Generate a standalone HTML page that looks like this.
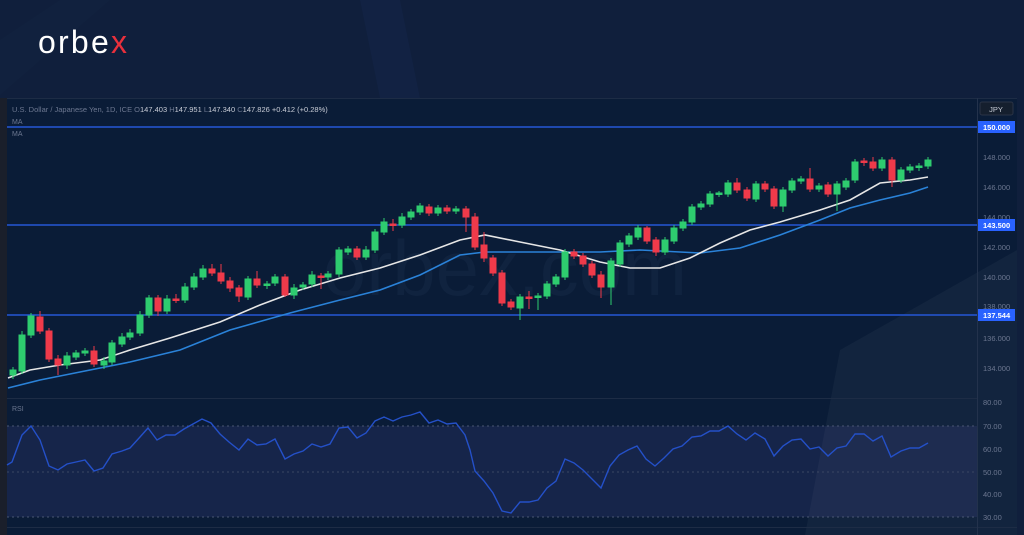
<!DOCTYPE html>
<html><head><meta charset="utf-8"><style>
html,body{margin:0;padding:0;width:1024px;height:535px;overflow:hidden;background:#0f1e3b;font-family:"Liberation Sans",sans-serif}
</style></head><body>
<svg width="1024" height="535" viewBox="0 0 1024 535" xmlns="http://www.w3.org/2000/svg" style="position:absolute;left:0;top:0">
<rect width="1024" height="535" fill="#101f3c"/>
<polygon points="0,40 60,0 110,0 0,95" fill="#13233f" opacity="0.6"/>
<polygon points="360,0 400,0 420,98 380,98" fill="#14254a" opacity="0.5"/>
<rect x="0" y="98" width="8" height="437" fill="#1a1f2b"/>
<rect x="7" y="98" width="1010" height="437" fill="#0a1c37"/>
<line x1="7" y1="98.5" x2="1017" y2="98.5" stroke="#1d2c45"/>
<rect x="7" y="426" width="970" height="91" fill="#16254a"/>
<polygon points="805,535 840,350 1017,250 1017,535" fill="#ffffff" opacity="0.035"/>
<line x1="7" y1="398.5" x2="977" y2="398.5" stroke="#1d2c45"/>
<line x1="7" y1="426" x2="977" y2="426" stroke="#4a5672" stroke-dasharray="2,3"/>
<line x1="7" y1="472" x2="977" y2="472" stroke="#3a4662" stroke-dasharray="2,3"/>
<line x1="7" y1="517" x2="977" y2="517" stroke="#4a5672" stroke-dasharray="2,3"/>
<line x1="7" y1="527.5" x2="1017" y2="527.5" stroke="#1d2c45"/>
<line x1="977.5" y1="98" x2="977.5" y2="535" stroke="#23324c"/>
<text x="505" y="295" font-size="78" fill="#10233f" text-anchor="middle" font-family="Liberation Sans,sans-serif">orbex.com</text>
<g stroke="#2457d6" stroke-width="1.5">
<line x1="7" y1="127" x2="977" y2="127"/>
<line x1="7" y1="225" x2="977" y2="225"/>
<line x1="7" y1="315" x2="977" y2="315"/>
</g>
<polyline fill="none" stroke="#2a82d8" stroke-width="1.6" points="8,388 40,380 80,372 130,362 180,350 230,330 290,313 340,300 380,290 420,275 460,255 485,252 540,252 600,252 640,250 700,253 740,248 780,235 820,220 850,208 880,200 910,193 928,187"/>
<polyline fill="none" stroke="#e6e6e6" stroke-width="1.6" points="8,378 30,370 60,365 100,360 130,350 170,338 220,322 260,305 300,290 340,278 380,268 420,255 460,240 485,235 520,242 560,250 600,262 630,268 660,268 690,258 720,243 750,230 780,222 820,210 850,200 880,183 910,180 928,177"/>
<g>
<g fill="#2ecc6f" stroke="#2ecc6f">
<path d="M13 367V379M22 331V374M31 313V338M67 352V369M76 350V360M85 348V356M104 357V369M112 340V365M122 333V347M130 329V340M140 311V336M149 295V318M167 295V314M185 283V303M194 273V290M203 265V280M248 276V300M267 281V289M275 274V286M294 284V299M303 282V290M312 271V287M328 271V280M339 247V277M348 246V255M366 246V260M375 229V253M384 218V235M402 213V228M411 209V220M420 203V215M438 205V216M456 206V214M520 294V320M538 293V310M547 281V299M556 274V287M565 249V280M611 258V305M620 240V267M629 233V247M638 225V240M665 237V255M674 225V244M683 219V231M692 204V225M701 201V210M710 191V207M719 191V197M728 180V197M756 181V202M783 187V212M792 178V193M801 176V184M819 183V192M837 181V211M846 178V190M855 159V183M882 157V171M901 167V183M910 164V173M919 163V171M928 157V169" stroke-width="1"/>
<rect x="10" y="370" width="6" height="5"/><rect x="19" y="335" width="6" height="36"/><rect x="28" y="316" width="6" height="19"/>
<rect x="64" y="356" width="6" height="9"/><rect x="73" y="353" width="6" height="4"/><rect x="82" y="351" width="6" height="2"/>
<rect x="101" y="361" width="6" height="4"/><rect x="109" y="343" width="6" height="19"/><rect x="119" y="337" width="6" height="7"/>
<rect x="127" y="333" width="6" height="4"/><rect x="137" y="315" width="6" height="18"/><rect x="146" y="298" width="6" height="17"/>
<rect x="164" y="299" width="6" height="12"/><rect x="182" y="287" width="6" height="13"/><rect x="191" y="277" width="6" height="10"/>
<rect x="200" y="269" width="6" height="8"/><rect x="245" y="279" width="6" height="18"/><rect x="264" y="284" width="6" height="1.5"/>
<rect x="272" y="277" width="6" height="6"/><rect x="291" y="288" width="6" height="7"/><rect x="300" y="285" width="6" height="2"/>
<rect x="309" y="275" width="6" height="9"/><rect x="325" y="274" width="6" height="3"/><rect x="336" y="250" width="6" height="24"/>
<rect x="345" y="249" width="6" height="3"/><rect x="363" y="250" width="6" height="7"/><rect x="372" y="232" width="6" height="18"/>
<rect x="381" y="222" width="6" height="10"/><rect x="399" y="217" width="6" height="8"/><rect x="408" y="212" width="6" height="5"/>
<rect x="417" y="206" width="6" height="6"/><rect x="435" y="208" width="6" height="5"/><rect x="453" y="209" width="6" height="2"/>
<rect x="517" y="297" width="6" height="11"/><rect x="535" y="296" width="6" height="1.5"/><rect x="544" y="284" width="6" height="12"/>
<rect x="553" y="277" width="6" height="7"/><rect x="562" y="252" width="6" height="25"/><rect x="608" y="261" width="6" height="26"/>
<rect x="617" y="243" width="6" height="21"/><rect x="626" y="236" width="6" height="8"/><rect x="635" y="228" width="6" height="9"/>
<rect x="662" y="240" width="6" height="12"/><rect x="671" y="228" width="6" height="13"/><rect x="680" y="222" width="6" height="6"/>
<rect x="689" y="207" width="6" height="15"/><rect x="698" y="204" width="6" height="3"/><rect x="707" y="194" width="6" height="10"/>
<rect x="716" y="193" width="6" height="1.5"/><rect x="725" y="183" width="6" height="11"/><rect x="753" y="184" width="6" height="15"/>
<rect x="780" y="190" width="6" height="16"/><rect x="789" y="181" width="6" height="9"/><rect x="798" y="179" width="6" height="2"/>
<rect x="816" y="186" width="6" height="3"/><rect x="834" y="184" width="6" height="10"/><rect x="843" y="181" width="6" height="6"/>
<rect x="852" y="162" width="6" height="18"/><rect x="879" y="160" width="6" height="8"/><rect x="898" y="170" width="6" height="10"/>
<rect x="907" y="167" width="6" height="3"/><rect x="916" y="166" width="6" height="1.5"/><rect x="925" y="160" width="6" height="6"/>
</g>
<g fill="#ef3a4a" stroke="#ef3a4a">
<path d="M40 311V334M49 328V362M58 355V375M94 346V367M158 295V316M176 294V303M212 264V276M221 264V284M230 277V292M239 285V302M257 271V288M285 274V297M321 273V289M357 246V260M393 219V231M429 204V216M447 205V214M466 206V232M475 213V250M484 232V262M493 255V276M502 270V306M511 299V310M529 291V309M574 249V259M583 253V267M592 261V278M601 271V298M647 226V244M656 237V256M737 178V193M747 187V201M765 181V192M774 186V209M810 168V192M828 182V197M864 158V166M873 157V171M892 157V187"/>
<rect x="37" y="317" width="6" height="14"/><rect x="46" y="331" width="6" height="28"/><rect x="55" y="359" width="6" height="6"/>
<rect x="91" y="351" width="6" height="13"/><rect x="155" y="298" width="6" height="13"/><rect x="173" y="299" width="6" height="1.5"/>
<rect x="209" y="269" width="6" height="4"/><rect x="218" y="273" width="6" height="8"/><rect x="227" y="281" width="6" height="7"/>
<rect x="236" y="288" width="6" height="8"/><rect x="254" y="279" width="6" height="6"/><rect x="282" y="277" width="6" height="18"/>
<rect x="318" y="276" width="6" height="1.5"/><rect x="354" y="249" width="6" height="8"/><rect x="390" y="224" width="6" height="1.5"/>
<rect x="426" y="207" width="6" height="6"/><rect x="444" y="208" width="6" height="3"/><rect x="463" y="209" width="6" height="8"/>
<rect x="472" y="217" width="6" height="30"/><rect x="481" y="245" width="6" height="13"/><rect x="490" y="258" width="6" height="15"/>
<rect x="499" y="273" width="6" height="30"/><rect x="508" y="302" width="6" height="5"/><rect x="526" y="297" width="6" height="1.5"/>
<rect x="571" y="252" width="6" height="4"/><rect x="580" y="256" width="6" height="8"/><rect x="589" y="264" width="6" height="11"/>
<rect x="598" y="275" width="6" height="12"/><rect x="644" y="228" width="6" height="13"/><rect x="653" y="240" width="6" height="12"/>
<rect x="734" y="183" width="6" height="7"/><rect x="744" y="190" width="6" height="8"/><rect x="762" y="184" width="6" height="5"/>
<rect x="771" y="189" width="6" height="17"/><rect x="807" y="179" width="6" height="10"/><rect x="825" y="185" width="6" height="9"/>
<rect x="861" y="161" width="6" height="1.5"/><rect x="870" y="162" width="6" height="6"/><rect x="889" y="160" width="6" height="20"/>
</g>
</g>
<polyline fill="none" stroke="#2450c8" stroke-width="1.4" points="7,465 12,462 22,435 31,426 40,440 49,466 58,470 67,464 76,462 85,460 94,471 103,468 112,454 122,451 130,448 140,437 148,428 157,440 166,435 175,435 184,429 193,424 202,419 211,423 220,434 229,442 239,450 248,439 257,445 266,444 275,439 285,459 294,454 303,451 312,444 321,447 330,444 339,428 348,427 357,438 366,433 375,421 384,417 393,421 402,417 411,415 420,412 429,423 438,420 447,424 456,423 465,435 470,450 475,471 484,481 493,493 502,511 511,513 520,502 529,502 538,500 547,488 556,481 565,459 574,463 583,470 592,479 601,488 610,466 619,455 628,450 637,446 646,459 655,466 664,458 673,449 682,446 692,437 701,436 710,431 719,431 728,426 737,434 746,440 755,433 765,439 774,456 783,446 792,440 801,439 810,449 819,447 828,456 837,448 846,446 855,434 864,434 873,441 882,436 891,457 901,451 910,448 919,448 928,443"/>
<text x="12" y="112" font-size="7.5" fill="#6c7790">U.S. Dollar / Japanese Yen, 1D, ICE <tspan>O</tspan><tspan fill="#c8ccd6">147.403</tspan> <tspan>H</tspan><tspan fill="#c8ccd6">147.951</tspan> <tspan>L</tspan><tspan fill="#c8ccd6">147.340</tspan> <tspan>C</tspan><tspan fill="#c8ccd6">147.826</tspan> <tspan fill="#c8ccd6">+0.412 (+0.28%)</tspan></text>
<text x="12" y="124" font-size="7" fill="#6c7790">MA</text>
<text x="12" y="136" font-size="7" fill="#6c7790">MA</text>
<text x="12" y="411" font-size="7" fill="#6c7790">RSI</text>
<rect x="980" y="102" width="33" height="13" rx="2" fill="#151f2e" stroke="#2a3345"/>
<text x="996" y="112" font-size="7.5" fill="#c8ccd6" text-anchor="middle">JPY</text>
<g font-size="7.5" fill="#6c7790">
<text x="983" y="160">148.000</text><text x="983" y="190">146.000</text><text x="983" y="220">144.000</text>
<text x="983" y="250">142.000</text><text x="983" y="280">140.000</text><text x="983" y="309">138.000</text>
<text x="983" y="341">136.000</text><text x="983" y="371">134.000</text>
<text x="983" y="405">80.00</text><text x="983" y="429">70.00</text><text x="983" y="452">60.00</text>
<text x="983" y="475">50.00</text><text x="983" y="497">40.00</text><text x="983" y="520">30.00</text>
</g>
<g fill="#2962ff"><rect x="978" y="121" width="37" height="12"/><rect x="978" y="219" width="37" height="12"/><rect x="978" y="309" width="37" height="12"/></g>
<g font-size="7.5" fill="#ffffff" font-weight="bold"><text x="983" y="130">150.000</text><text x="983" y="228">143.500</text><text x="983" y="318">137.544</text></g>
<text x="38" y="53" font-size="32" fill="#ffffff" font-family="Liberation Sans,sans-serif" textLength="89" lengthAdjust="spacing">orbe<tspan fill="#e8303c">x</tspan></text>
</svg>
</body></html>
